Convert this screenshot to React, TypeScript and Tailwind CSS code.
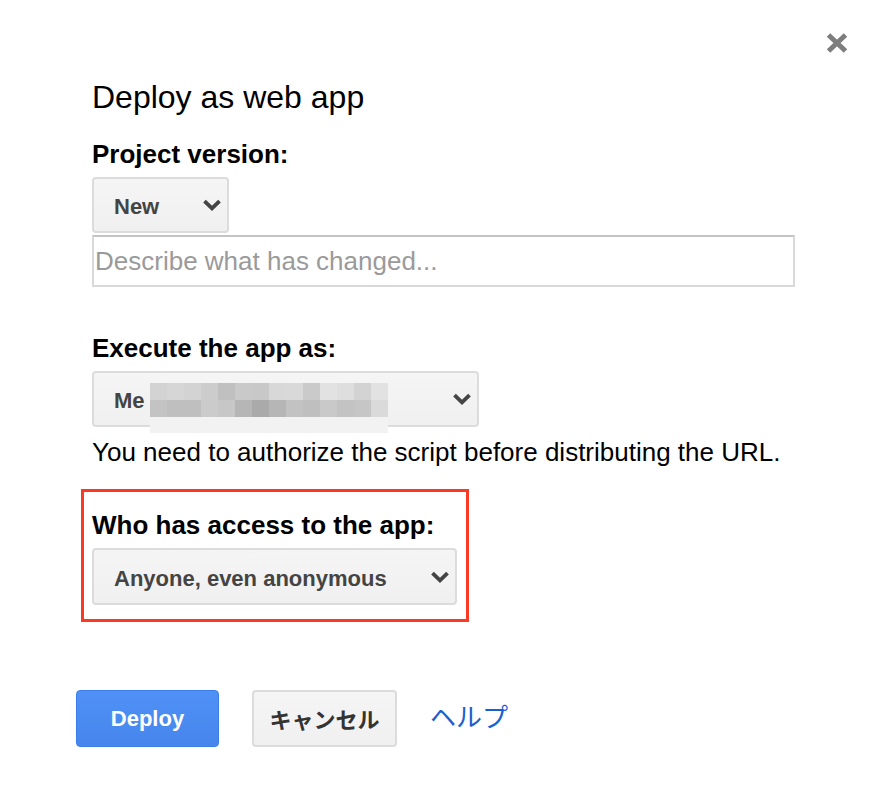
import React from "react";

const row1 = [
  "bg-[#d3d3d3]", "bg-[#d6d6d6]", "bg-[#d3d3d3]", "bg-[#cccccc]", "bg-[#c0c0c0]", "bg-[#c9c9c9]", "bg-[#c8c8c8]",
  "bg-[#d8d8d8]", "bg-[#d9d9d9]", "bg-[#cacaca]", "bg-[#e2e2e2]", "bg-[#dedede]", "bg-[#d3d3d3]", "bg-[#e2e2e2]",
];
const row2 = [
  "bg-[#c3c3c3]", "bg-[#bfbfbf]", "bg-[#bfbfbf]", "bg-[#cbcbcb]", "bg-[#c7c7c7]", "bg-[#b6b6b6]", "bg-[#aaaaaa]",
  "bg-[#b6b6b6]", "bg-[#c2c2c2]", "bg-[#bfbfbf]", "bg-[#c9c9c9]", "bg-[#c3c3c3]", "bg-[#c6c6c6]", "bg-[#dadada]",
];

function Chevron() {
  return (
    <svg width="20" height="12" viewBox="0 0 20 12" className="shrink-0">
      <path d="M2.5 2.2 L10 9.3 L17.5 2.2" fill="none" stroke="#444" strokeWidth="3.8" strokeLinejoin="miter" />
    </svg>
  );
}

function Select({ label, className, children }: { label: string; className: string; children?: React.ReactNode }) {
  return (
    <div
      className={
        "relative flex items-center justify-between h-[56px] border-2 border-[#dcdcdc] rounded-[4px] bg-linear-to-b from-[#f5f5f5] to-[#f0f0f0] pl-[20px] pr-[5px] text-[22px] font-bold text-[#444] " +
        className
      }
    >
      <span className="pt-[3px]">{label}</span>
      <Chevron />
      {children}
    </div>
  );
}

export default function App() {
  return (
    <div className="relative w-[884px] h-[792px] bg-white font-['Liberation_Sans',Arial,sans-serif] text-black overflow-hidden">
      <button className="absolute left-[825px] top-[32px] w-[24px] h-[22px]" aria-label="Close">
        <svg width="24" height="22" viewBox="0 0 24 22">
          <path d="M3.5 3 L20.5 19 M20.5 3 L3.5 19" stroke="#7d7d7d" strokeWidth="5" strokeLinecap="butt" />
        </svg>
      </button>

      <div className="pl-[92px] pt-[79px]">
        <h1 className="text-[32px] leading-[36px] font-normal">Deploy as web app</h1>

        <div className="mt-[24px] text-[26px] leading-[30px] font-bold">Project version:</div>
        <Select label="New" className="mt-[8px] w-[137px]" />
        <input
          className="block mt-[2px] w-[703px] h-[52px] border-2 border-[#d9d9d9] border-t-[#c4c4c4] pl-[1px] text-[26px] outline-none placeholder:text-[#9a9a9a]"
          placeholder="Describe what has changed..."
        />

        <div className="mt-[46px] text-[26px] leading-[30px] font-bold">Execute the app as:</div>
        <Select label="Me" className="mt-[8px] w-[387px]">
          <div className="absolute left-[56px] top-[10px] w-[238px] flex flex-col">
            <div className="flex">
              {row1.map((c, i) => (
                <div key={i} className={"w-[17px] h-[17px] " + c} />
              ))}
            </div>
            <div className="flex">
              {row2.map((c, i) => (
                <div key={i} className={"w-[17px] h-[17px] " + c} />
              ))}
            </div>
            <div className="h-[16px] bg-[#f2f2f2]" />
          </div>
        </Select>
        <div className="mt-[10px] text-[26px] leading-[30px]">You need to authorize the script before distributing the URL.</div>

        <div className="-ml-[11px] mt-[22px] w-[388px] h-[133px] border-[3px] border-[#fb3a26] pt-[18px] pl-[8px]">
          <div className="text-[26px] leading-[30px] font-bold">Who has access to the app:</div>
          <Select label="Anyone, even anonymous" className="mt-[8px] w-[365px] h-[57px]" />
        </div>

        <div className="-ml-[16px] mt-[68px] flex items-center">
          <button className="w-[143px] h-[57px] rounded-[4px] border border-[#3a7ee8] bg-linear-to-b from-[#4f91f6] to-[#4686ec] text-white text-[22px] font-bold">
            Deploy
          </button>
          <button className="ml-[33px] w-[145px] h-[57px] rounded-[4px] border-2 border-[#dcdcdc] bg-linear-to-b from-[#f5f5f5] to-[#f0f0f0] text-[#333] text-[22px] font-bold font-['Noto_Sans_CJK_JP',sans-serif]">
            キャンセル
          </button>
          <a className="ml-[33px] mb-[6px] text-[26px] text-[#1a5fd1] font-['Noto_Sans_CJK_JP',sans-serif] cursor-pointer">
            ヘルプ
          </a>
        </div>
      </div>
    </div>
  );
}
